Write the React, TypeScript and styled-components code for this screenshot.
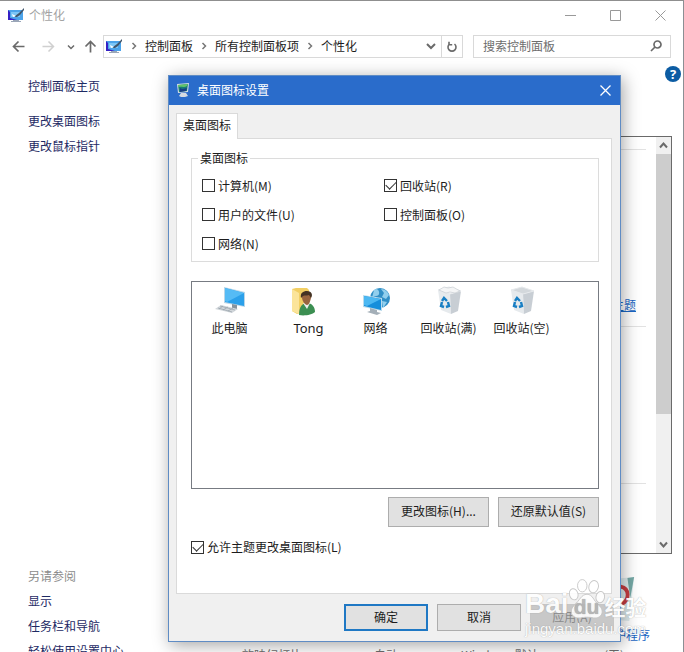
import React from "react";
import styled, { createGlobalStyle } from "styled-components";

const GlobalStyle = createGlobalStyle`
  * { box-sizing: border-box; }
  body {
    margin: 0;
    background: #fff;
    color: #1c1c1c;
    font: 12px/16px "Noto Sans CJK SC", sans-serif;
  }
  button, input { font: inherit; color: inherit; }
`;

const Page = styled.div`
  position: relative;
  display: flex;
  flex-direction: column;
  height: 100vh;
  overflow: hidden;
  border-top: 1px solid #8f8f8f;
  border-right: 1px solid #8b8f94;
`;

const TitleBar = styled.header`
  display: flex;
  align-items: center;
  gap: 4px;
  height: 28px;
  padding-left: 8px;
  color: #a3a3a3;
`;

const WindowTitle = styled.h1`
  flex: 1;
  margin: 0;
  font-size: 12px;
  font-weight: 400;
`;

const WindowButtons = styled.div`
  display: flex;
`;

const IconButton = styled.button<{ $w: number; $h?: number }>`
  display: flex;
  flex: none;
  align-items: center;
  justify-content: center;
  width: ${(p) => p.$w}px;
  height: ${(p) => p.$h ?? 22}px;
  padding: 0;
  border: 0;
  background: none;
`;

const NavBar = styled.nav`
  display: flex;
  align-items: center;
  margin-top: 6px;
  padding: 0 12px 0 3px;
`;

const AddressBox = styled.div`
  display: flex;
  flex: 1;
  align-items: center;
  height: 23px;
  padding: 0 0 1px 2px;
  border: 1px solid #d9d9d9;
`;

const Crumbs = styled.ol`
  display: flex;
  flex: 1;
  margin: 0;
  padding: 0;
  list-style: none;
`;

const Crumb = styled.li`
  display: flex;
  align-items: center;
`;

const CrumbLink = styled.a`
  color: #1c1c1c;
  text-decoration: none;
`;

const ChevronSlot = styled.span`
  display: flex;
  justify-content: center;
  width: 22px;
`;

const RefreshSlot = styled.div`
  height: 21px;
  border-left: 1px solid #d9d9d9;
`;

const SearchBox = styled.div`
  display: flex;
  align-items: center;
  width: 198px;
  height: 23px;
  margin-left: 10px;
  padding: 0 4px 1px 9px;
  border: 1px solid #d9d9d9;
`;

const SearchInput = styled.input`
  flex: 1;
  min-width: 0;
  padding: 0;
  border: 0;
  outline: 0;
  background: none;
  &::placeholder { color: #6d6d6d; opacity: 1; }
`;

const Body = styled.div`
  display: flex;
  flex: 1;
  min-height: 0;
`;

const Sidebar = styled.aside`
  display: flex;
  flex-direction: column;
  flex: none;
  width: 190px;
  padding: 20px 0 0 28px;
`;

const LinkGroup = styled.div<{ $gap: number }>`
  display: flex;
  flex-direction: column;
  align-items: flex-start;
  gap: 9px;
  margin-top: ${(p) => p.$gap}px;
`;

const SeeAlso = styled(LinkGroup)`
  margin-top: auto;
  margin-bottom: -7px;
`;

const SideLink = styled.a`
  color: #1e2a64;
  text-decoration: none;
`;

const SideHeading = styled.span`
  color: #8c8c8c;
`;

const Content = styled.main`
  display: flex;
  flex: 1;
  flex-direction: column;
  min-width: 0;
`;

const HelpRow = styled.div`
  display: flex;
  justify-content: flex-end;
  height: 78px;
  padding: 8px 2px 0 0;
`;

const HelpButton = styled.button`
  width: 16px;
  height: 16px;
  padding: 0;
  border: 0;
  border-radius: 50%;
  background: #0c5ca3;
  color: #fff;
  font: 700 13px/16px "Open Sans", sans-serif;
`;

const ThemePane = styled.section`
  display: flex;
  flex: 1;
  min-height: 0;
  margin-right: 11px;
  border: 1px solid #6a6a6a;
`;

const ThemeRows = styled.div`
  display: flex;
  flex: 1;
  flex-direction: column;
  align-items: flex-end;
  padding: 12px 10px 0 0;
`;

const ThemeRow = styled.div<{ $h: number }>`
  display: flex;
  align-items: flex-end;
  justify-content: flex-end;
  width: 100%;
  height: ${(p) => p.$h}px;
  padding: 0 10px 13px;
  border-top: 1px solid #e2e2e2;
`;

const BlueLink = styled.a`
  color: #1a66c4;
`;

const SettingLink = styled(BlueLink)`
  text-decoration: none;
`;

const ScrollBar = styled.div`
  display: flex;
  flex-direction: column;
  width: 15px;
  background: #f0f0f0;
`;

const ScrollThumb = styled.div`
  flex: 1;
  background: #cdcdcd;
`;

const ScrollTrack = styled.div`
  height: 122px;
`;

const Settings = styled.div`
  display: grid;
  grid-template-columns: repeat(4, 114px);
  justify-content: end;
  height: 98px;
  margin-right: 12px;
  padding-top: 23px;
  overflow: hidden;
`;

const Setting = styled.div`
  display: flex;
  flex-direction: column;
  align-items: center;
  gap: 4px;
  white-space: nowrap;
  color: #6d6d6d;
`;

const Dialog = styled.section`
  position: absolute;
  top: 74px;
  left: 168px;
  right: 62px;
  border: 1px solid #5f8cc4;
  background: #f0f0f0;
  box-shadow: 2px 3px 16px rgba(0, 0, 0, 0.36);
`;

const DialogTitle = styled.header`
  display: flex;
  align-items: center;
  gap: 5px;
  height: 29px;
  padding: 0 0 1px 7px;
  background: #2a6ccb;
  color: #fff;
`;

const DialogBody = styled.div`
  padding: 8px 6px 10px 7px;
`;

const Tab = styled.button`
  position: relative;
  display: block;
  height: 26px;
  margin-bottom: -1px;
  padding: 0 6px 3px;
  border: 1px solid #dadada;
  border-bottom: 0;
  background: #fff;
`;

const TabPanel = styled.div`
  margin-right: 2px;
  padding: 11px 12px 38px 14px;
  border: 1px solid #dadada;
  background: #fff;
`;

const Group = styled.fieldset`
  margin: 0;
  padding: 0;
  border: 1px solid #dcdcdc;
`;

const Legend = styled.legend`
  margin-left: 6px;
  padding: 0 2px;
`;

const Checks = styled.div`
  display: grid;
  grid-template-columns: 182px 1fr;
  grid-auto-rows: 29px;
  align-items: center;
  padding: 5px 0 3px 10px;
`;

const CheckLabel = styled.label`
  display: flex;
  align-items: center;
  gap: 3px;
`;

const CheckBox = styled.input`
  appearance: none;
  display: grid;
  place-items: center;
  width: 13px;
  height: 13px;
  margin: 0;
  border: 1px solid #333;
  background: #fff;
  &:checked::after {
    content: "";
    width: 9px;
    height: 5px;
    margin-bottom: 3px;
    border: solid #333;
    border-width: 0 0 1px 1px;
    transform: rotate(-45deg);
  }
`;

const IconList = styled.ul`
  display: flex;
  height: 208px;
  margin: 19px 0 8px;
  padding: 4px 0 0 1px;
  border: 1px solid #777b82;
  list-style: none;
`;

const IconItem = styled.li`
  display: flex;
  flex-direction: column;
  align-items: center;
  gap: 4px;
  width: 73px;
  white-space: nowrap;
`;

const UserName = styled.span`
  padding-left: 12px;
  font: 13px/16px "Noto Sans", sans-serif;
`;

const ButtonRow = styled.div<{ $top: number }>`
  display: flex;
  justify-content: flex-end;
  gap: 9px;
  margin-top: ${(p) => p.$top}px;
`;

const Button = styled.button<{ $w: number; $h: number; $primary?: boolean }>`
  width: ${(p) => p.$w}px;
  height: ${(p) => p.$h}px;
  padding: 0 0 2px;
  border: ${(p) => (p.$primary ? "2px solid #1f78c4" : "1px solid #adadad")};
  background: #e1e1e1;
  &:disabled {
    border-color: #c6c6c6;
    background: #c8c8c8;
    color: #8a8a8a;
  }
`;

const ThemeCheck = styled(CheckLabel)`
  margin-top: 12px;
`;

const Watermark = styled.div`
  position: absolute;
  right: 34px;
  bottom: 14px;
  width: 124px;
  color: #fff;
  text-shadow: 0 0 1px rgba(120, 120, 120, 0.7);
  white-space: nowrap;
  opacity: 0.9;
  pointer-events: none;
`;

const WatermarkLogo = styled.div`
  display: flex;
  align-items: flex-end;
  height: 42px;
  font: 700 28px/32px "Liberation Sans", sans-serif;
`;

const Paw = styled.span`
  position: relative;
  display: flex;
  flex: none;
  width: 36px;
  height: 42px;
`;

const PawText = styled.span`
  position: absolute;
  inset: 16px 0 0 0;
  color: #b4b4b4;
  font: 700 21px/26px "Liberation Sans", sans-serif;
  text-align: center;
`;

const WatermarkName = styled.span`
  font: 700 21px/28px "Noto Sans CJK SC", sans-serif;
`;

const WatermarkUrl = styled.div`
  font: 15px/18px "Liberation Sans", sans-serif;
`;

const Monitor = () => (
  <svg width="17" height="15" viewBox="0 0 17 15" aria-hidden="true">
    <path d="M0 2h15v10H0z" fill="#4ba3ea" />
    <path d="M0 2l2 2v6l7 2H0z" fill="#3420c4" />
    <path d="M3 4h9v5H3z" fill="#7cc6f6" />
    <path d="M5 12h6v1h2v1H3v-1h2z" fill="#9aa6b8" />
    <path d="M16 0l-5 5-4 3v1h2l3-2 4-5z" fill="#40556b" />
    <path d="M4 6l4 2-3 1z" fill="#fff" />
  </svg>
);

const DialogIcon = () => (
  <svg width="16" height="16" viewBox="0 0 16 16" aria-hidden="true">
    <path d="M1 2l12-1-1 9-10 1z" fill="#d5dde4" />
    <path d="M2 3l10-1-1 7-8 1z" fill="#167c76" />
    <path d="M2 3l10-1-1 2c-3 2-6 0-9 1z" fill="#62c46a" />
    <path d="M4 6c3 2 5 0 7 0l-1 3-6 1z" fill="#173d83" />
    <path d="M5 11h5l2 3-3 1H5l-2-1z" fill="#d5dbe2" />
  </svg>
);

const Stroke = ({ d, size, color = "#6a6a6a", width = 1 }: { d: string; size: number; color?: string; width?: number }) => (
  <svg width={size} height={size} viewBox={`0 0 ${size} ${size}`} fill="none" stroke={color} strokeWidth={width} aria-hidden="true">
    <path d={d} />
  </svg>
);

const closePath = "M.5.5l10 10M10.5.5l-10 10";

const ChevronRight = () => <Stroke size={8} d="M2.5 1l3 3-3 3" width={1.5} color="#777" />;

const PcIcon = () => (
  <svg width="30" height="30" viewBox="0 0 30 30" aria-hidden="true">
    <path d="M9 1l21 5v15L9 17z" fill="#b9d6e8" />
    <path d="M10 2l19 5v13l-19-4z" fill="#2ba0ea" />
    <path d="M10 2l19 5L12 16l-2-1z" fill="#55bbf5" />
    <path d="M17 18l5 1v4h-5z" fill="#87939d" />
    <path d="M6 19l17 4-6 4L0 23z" fill="#d2d7db" />
    <path d="M5 20l15 4M3 22l14 4M8 20l-4 3M13 21l-5 3M18 22l-5 3" stroke="#98a2aa" strokeWidth=".7" />
  </svg>
);

const UserIcon = () => (
  <svg width="30" height="30" viewBox="0 0 30 30" aria-hidden="true">
    <path d="M4 3l4-1h11l2 2v20l-12 4-5-3z" fill="#f2cf64" />
    <path d="M4 3l7 4v21l-7-3z" fill="#fbe49a" />
    <path d="M11 29c0-8 3-12 8-12 5 0 8 4 8 9-3 3-11 4-16 3z" fill="#3c8f52" />
    <path d="M15 17l4 6 3-6z" fill="#eee" />
    <path d="M14 11c0-4 2-5 5-5s5 2 4 6-2 7-4 7-5-4-5-8z" fill="#98643f" />
    <path d="M13 12c-1-5 2-7 6-7 5 0 6 4 4 7l-2-3c-3 1-4 0-6 1z" fill="#443224" />
  </svg>
);

const NetworkIcon = () => (
  <svg width="30" height="30" viewBox="0 0 30 30" aria-hidden="true">
    <circle cx="19" cy="12" r="10" fill="#318fc6" />
    <path d="M13 4c3-3 6 1 5 4s-4 1-7 4zM20 3c4 0 7 3 8 6l-3 4-4-2 2-4zM21 15l5 1-4 6z" fill="#92cfed" />
    <path d="M2 9l19 3v13L2 21z" fill="#b9dbed" />
    <path d="M3 10l17 3v11L3 20z" fill="#168edb" />
    <path d="M3 10l17 3L6 20l-3-1z" fill="#4cb8f2" />
    <path d="M9 22l7 2v2l4 1-4 2-10-3 3-1z" fill="#a4afb8" />
  </svg>
);

const BinIcon = ({ full = false }: { full?: boolean }) => (
  <svg width="30" height="30" viewBox="0 0 30 30" aria-hidden="true">
    <path d="M4 4l12 4 1 20-10-4z" fill="#e6eaed" />
    <path d="M16 8l11-3-3 20-7 3z" fill="#c8ced4" />
    <path d="M4 4l11-3 12 4-11 3z" fill={full ? "#f5f6f7" : "#d3d8dc"} stroke="#e6e9ec" />
    {full && <path d="M5 4l5-3 4 1 5-1 7 4-5 2-5-1-4 1z" fill="#f4f5f6" stroke="#c7cdd2" strokeWidth=".7" />}
    <path d="M8 15l2-3 3 3M14 16l1 4-3 1M10 21l-3-1 1-4" fill="none" stroke="#197fc4" strokeWidth="2.4" />
  </svg>
);

const SaverIcon = () => (
  <svg width="46" height="46" viewBox="0 0 46 48" aria-hidden="true">
    <path d="M4 4l40-4-5 46-35-3z" fill="#dfecee" />
    <path d="M37 1l7-1-4 22z" fill="#75a9a6" />
    <path d="M30 10c10 2 9 15 1 18" fill="none" stroke="#c83c42" strokeWidth="4" />
  </svg>
);

const PawIcon = () => (
  <svg width="36" height="42" viewBox="0 0 38 42" fill="#fff" stroke="#c4c4c4" strokeWidth="1" aria-hidden="true">
    <ellipse cx="14" cy="7" rx="5" ry="6.5" />
    <ellipse cx="26" cy="8" rx="5" ry="6.5" transform="rotate(15 26 8)" />
    <ellipse cx="5" cy="16" rx="4.5" ry="6" transform="rotate(-15 5 16)" />
    <ellipse cx="33" cy="19" rx="4.5" ry="6" transform="rotate(10 33 19)" />
    <path d="M19 16c6 0 7 7 12 11 8 7 3 15-5 14-5-1-9-1-14 0-9 1-13-7-6-14 5-4 7-11 13-11z" />
  </svg>
);

const crumbs = ["控制面板", "所有控制面板项", "个性化"];

const iconChecks = [
  { label: "计算机(M)", on: false },
  { label: "回收站(R)", on: true },
  { label: "用户的文件(U)", on: false },
  { label: "控制面板(O)", on: false },
  { label: "网络(N)", on: false },
];

const Check = ({ label, on }: { label: string; on: boolean }) => (
  <CheckLabel>
    <CheckBox type="checkbox" defaultChecked={on} />
    {label}
  </CheckLabel>
);

export default function App() {
  return (
    <Page>
      <GlobalStyle />
      <TitleBar>
        <Monitor />
        <WindowTitle>个性化</WindowTitle>
        <WindowButtons>
          <IconButton $w={45} aria-label="最小化"><Stroke size={11} d="M0 5.5h11" color="#999" /></IconButton>
          <IconButton $w={45} aria-label="最大化"><Stroke size={11} d="M.5.5h10v10h-10z" color="#999" /></IconButton>
          <IconButton $w={45} aria-label="关闭"><Stroke size={11} d={closePath} color="#999" /></IconButton>
        </WindowButtons>
      </TitleBar>
      <NavBar>
        <IconButton $w={30} aria-label="后退"><Stroke size={13} d="M12.5 6.5h-11M6.5 1.5l-5 5 5 5" width={1.7} /></IconButton>
        <IconButton $w={30} aria-label="前进"><Stroke size={13} d="M.5 6.5h11M6.5 1.5l5 5-5 5" color="#d0d0d0" width={1.5} /></IconButton>
        <IconButton $w={15} aria-label="最近位置"><Stroke size={8} d="M1 2.5l3 3 3-3" width={1.5} /></IconButton>
        <IconButton $w={25} aria-label="上移"><Stroke size={13} d="M6.5 12.5v-11M1.5 6.5l5-5 5 5" width={1.7} /></IconButton>
        <AddressBox>
          <Monitor />
          <Crumbs>
            {crumbs.map((name) => (
              <Crumb key={name}>
                <ChevronSlot><ChevronRight /></ChevronSlot>
                <CrumbLink href="#">{name}</CrumbLink>
              </Crumb>
            ))}
          </Crumbs>
          <IconButton $w={20} aria-label="展开"><Stroke size={10} d="M1 3l4 4 4-4" width={2} /></IconButton>
          <RefreshSlot>
            <IconButton $w={20} aria-label="刷新"><Stroke size={12} d="M8.5 3a4 4 0 1 1-5 0M3 .8v3h3.2" width={1.6} /></IconButton>
          </RefreshSlot>
        </AddressBox>
        <SearchBox>
          <SearchInput type="search" aria-label="搜索控制面板" placeholder="搜索控制面板" />
          <IconButton $w={20} aria-label="搜索"><Stroke size={12} d="M1 11l4-4M11 4.5a3.5 3.5 0 1 1-7 0 3.5 3.5 0 0 1 7 0" width={1.7} /></IconButton>
        </SearchBox>
      </NavBar>
      <Body>
        <Sidebar>
          <SideLink href="#">控制面板主页</SideLink>
          <LinkGroup $gap={19}>
            <SideLink href="#">更改桌面图标</SideLink>
            <SideLink href="#">更改鼠标指针</SideLink>
          </LinkGroup>
          <SeeAlso $gap={0}>
            <SideHeading>另请参阅</SideHeading>
            <SideLink href="#">显示</SideLink>
            <SideLink href="#">任务栏和导航</SideLink>
            <SideLink href="#">轻松使用设置中心</SideLink>
          </SeeAlso>
        </Sidebar>
        <Content>
          <HelpRow><HelpButton aria-label="帮助">?</HelpButton></HelpRow>
          <ThemePane>
            <ThemeRows>
              <ThemeRow $h={177}><BlueLink href="#">联机获取更多主题</BlueLink></ThemeRow>
              <ThemeRow $h={157} />
              <ThemeRow $h={60} />
            </ThemeRows>
            <ScrollBar>
              <IconButton $w={15} $h={17} aria-label="向上滚动"><Stroke size={9} d="M1 6.5l3.5-4 3.5 4" width={2} /></IconButton>
              <ScrollThumb />
              <ScrollTrack />
              <IconButton $w={15} $h={17} aria-label="向下滚动"><Stroke size={9} d="M1 2.5l3.5 4 3.5-4" width={2} /></IconButton>
            </ScrollBar>
          </ThemePane>
          <Settings>
            <Setting><SaverIcon /><SettingLink href="#">桌面背景</SettingLink>放映幻灯片</Setting>
            <Setting><SaverIcon /><SettingLink href="#">颜色</SettingLink>自动</Setting>
            <Setting><SaverIcon /><SettingLink href="#">声音</SettingLink>Windows 默认</Setting>
            <Setting><SaverIcon /><SettingLink href="#">屏幕保护程序</SettingLink>(无)</Setting>
          </Settings>
        </Content>
      </Body>
      <Dialog role="dialog" aria-label="桌面图标设置">
        <DialogTitle>
          <DialogIcon />
          <WindowTitle as="h2">桌面图标设置</WindowTitle>
          <IconButton $w={30} aria-label="关闭"><Stroke size={11} d={closePath} color="#fff" width={1.3} /></IconButton>
        </DialogTitle>
        <DialogBody>
          <Tab role="tab" aria-selected="true">桌面图标</Tab>
          <TabPanel role="tabpanel">
            <Group>
              <Legend>桌面图标</Legend>
              <Checks>
                {iconChecks.map((c) => <Check key={c.label} {...c} />)}
              </Checks>
            </Group>
            <IconList>
              <IconItem><PcIcon />此电脑</IconItem>
              <IconItem><UserIcon /><UserName>Tong</UserName></IconItem>
              <IconItem><NetworkIcon />网络</IconItem>
              <IconItem><BinIcon full />回收站(满)</IconItem>
              <IconItem><BinIcon />回收站(空)</IconItem>
            </IconList>
            <ButtonRow $top={0}>
              <Button $w={101} $h={30}>更改图标(H)...</Button>
              <Button $w={101} $h={30}>还原默认值(S)</Button>
            </ButtonRow>
            <ThemeCheck>
              <CheckBox type="checkbox" defaultChecked />
              允许主题更改桌面图标(L)
            </ThemeCheck>
          </TabPanel>
          <ButtonRow $top={10}>
            <Button $w={84} $h={27} $primary>确定</Button>
            <Button $w={84} $h={27}>取消</Button>
            <Button $w={84} $h={27} disabled>应用(A)</Button>
          </ButtonRow>
        </DialogBody>
      </Dialog>
      <Watermark>
        <WatermarkLogo>
          <span>Bai</span>
          <Paw><PawIcon /><PawText>du</PawText></Paw>
          <WatermarkName>经验</WatermarkName>
        </WatermarkLogo>
        <WatermarkUrl>jingyan.baidu.com</WatermarkUrl>
      </Watermark>
    </Page>
  );
}
